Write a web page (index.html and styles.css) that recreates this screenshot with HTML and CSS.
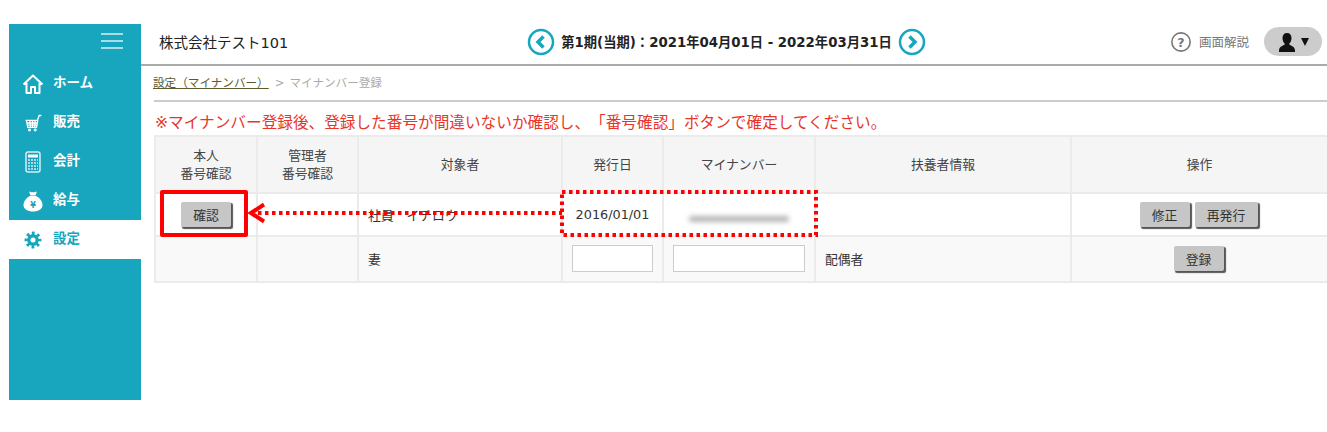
FILE: index.html
```html
<!DOCTYPE html>
<html lang="ja">
<head>
<meta charset="utf-8">
<title>マイナンバー登録</title>
<link rel="stylesheet" href="styles.css">
</head>
<body>
<div class="app">
  <aside class="sidebar">
    <div class="burger"><span></span><span></span><span></span></div>
    <nav class="menu">
      <a class="item"><svg class="ico" viewBox="0 0 22 22"><path d="M1.500 11.500 11 2.500l9.500 9M4.500 10v10h4.500v-6h4v6h4.500V10" fill="none" stroke="#fff" stroke-width="2" stroke-linejoin="round"/></svg><span class="lbl">ホーム</span></a>
      <a class="item"><svg class="ico" viewBox="-2 -2 25 25"><path d="M2 7.500h13.500l2-5.500h2.500M3 7.500l1.500 8h10l1.500-8M4 10.500h12M4.500 13h11M7 7.500l.5 8M10 7.500v8M13 7.500l-.5 8" fill="none" stroke="#fff" stroke-width="1.500"/><circle cx="6.500" cy="18.500" r="1.700" fill="#fff"/><circle cx="13" cy="18.500" r="1.700" fill="#fff"/></svg><span class="lbl">販売</span></a>
      <a class="item"><svg class="ico" viewBox="0 0 22 22"><rect x="4" y="1" width="14" height="20" rx="2" fill="none" stroke="#d5eef3" stroke-width="1.500"/><rect x="6" y="3.500" width="10" height="3" fill="#fff"/><path d="M6 9h10M6 12h10M6 15h10M6 18h10" stroke="#d5eef3" stroke-width="1.600" stroke-dasharray="2 1"/></svg><span class="lbl">会計</span></a>
      <a class="item"><svg class="ico" viewBox="0 0 22 22"><path d="M7 1.500c2 1 6 1 8 0l-1.500 4h-5z" fill="#fff"/><path d="M8 6h6c4 2 6.500 5.500 6.500 9 0 4-4 6.500-9.500 6.500S1.500 19 1.500 15c0-3.500 2.500-7 6.500-9z" fill="#fff"/><text class="yen" x="11" y="17.500" text-anchor="middle">¥</text></svg><span class="lbl">給与</span></a>
      <a class="item active"><svg class="ico" viewBox="-3 -3 28 28"><circle cx="11" cy="11" r="7.500" fill="#17a6bd"/><circle cx="11" cy="11" r="8.500" fill="none" stroke="#17a6bd" stroke-width="4.500" stroke-dasharray="3.340 3.340" stroke-dashoffset="1.670"/><circle cx="11" cy="11" r="3.200" fill="#fff"/></svg><span class="lbl">設定</span></a>
    </nav>
  </aside>
  <main class="main">
    <header class="topbar">
      <div class="company">株式会社テスト101</div>
      <div class="period">
        <svg class="round" viewBox="0 0 28 28"><circle cx="14" cy="14" r="12" fill="none" stroke="#17a6bd" stroke-width="2.500"/><path d="M16.500 8.500 11 14l5.500 5.500" fill="none" stroke="#17a6bd" stroke-width="3.500"/></svg>
        <span class="period-text">第1期(当期)：2021年04月01日 - 2022年03月31日</span>
        <svg class="round" viewBox="0 0 28 28"><circle cx="14" cy="14" r="12" fill="none" stroke="#17a6bd" stroke-width="2.500"/><path d="M11.500 8.500 17 14l-5.500 5.500" fill="none" stroke="#17a6bd" stroke-width="3.500"/></svg>
      </div>
      <div class="tools">
        <div class="help">
          <svg class="help-ico" viewBox="0.500 0.500 19 19"><circle cx="10" cy="10" r="8.700" fill="none" stroke="#777" stroke-width="1.500"/><text class="q" x="10" y="14.500" text-anchor="middle">?</text></svg>
          <span>画面解説</span>
        </div>
        <div class="user">
          <svg class="user-ico" viewBox="0 0 20 20"><path d="M10 1c3 0 4.500 2 4.500 5s-1.200 5-2.500 6c.5 1.500 6 2 6 6.500V20H2v-1.500C2 14 7.500 13.500 8 12 6.700 11 5.500 9 5.500 6S7 1 10 1z" fill="#111"/></svg>
          <span class="caret"></span>
        </div>
      </div>
    </header>
    <div class="crumbs"><a class="crumb-link">設定（マイナンバー）</a><span class="crumb-sep">&gt;</span><span>マイナンバー登録</span></div>
    <p class="notice">※マイナンバー登録後、登録した番号が間違いないか確認し、「番号確認」ボタンで確定してください。</p>
    <div class="table-wrap">
      <table class="grid">
        <colgroup>
          <col class="c1"><col class="c2"><col class="c3"><col class="c4"><col class="c5"><col class="c6"><col class="c7">
        </colgroup>
        <thead>
          <tr class="head">
            <th>本人<br>番号確認</th><th>管理者<br>番号確認</th><th>対象者</th><th>発行日</th><th>マイナンバー</th><th>扶養者情報</th><th>操作</th>
          </tr>
        </thead>
        <tbody>
          <tr class="row-a">
            <td class="mid"><button class="btn">確認</button></td>
            <td></td>
            <td>社員　イチロウ</td>
            <td class="mid">2016/01/01</td>
            <td class="mid"><span class="blurred"></span></td>
            <td></td>
            <td class="mid ops"><button class="btn">修正</button><button class="btn">再発行</button></td>
          </tr>
          <tr class="row-b">
            <td></td>
            <td></td>
            <td>妻</td>
            <td class="mid"><input class="field f-date" type="text"></td>
            <td class="mid"><input class="field f-num" type="text"></td>
            <td>配偶者</td>
            <td class="mid ops"><button class="btn">登録</button></td>
          </tr>
        </tbody>
      </table>
      <div class="mark-box"></div>
      <svg class="mark-dots" width="258" height="47" viewBox="0 0 258 47"><rect x="2" y="2" width="254" height="43" fill="none" stroke="#f00" stroke-width="4" stroke-dasharray="3.500 3.500"/></svg>
      <svg class="mark-arrow" width="316" height="24" viewBox="0 0 316 24"><path d="M16 3.500 3 12l13 8.500" fill="none" stroke="#f00" stroke-width="4"/><path d="M10 12h304" stroke="#f00" stroke-width="4" stroke-dasharray="3.500 3.500"/></svg>
    </div>
  </main>
</div>
</body>
</html>
```
FILE: styles.css
```css
* { box-sizing: border-box; }
html, body { margin: 0; padding: 0; background: #fff; }
body {
  font-family: "DejaVu Sans", "Noto Sans CJK JP", sans-serif;
  font-size: 12.800px;
  color: #333;
  height: 432px;
  overflow: hidden;
  text-spacing-trim: space-all;
}
.app { display: flex; height: 376px; margin: 24px 0 0 9px; }
.sidebar { width: 132px; flex: none; background: #17a6bd; }
.burger {
  height: 40px;
  padding: 9px 18px 0 92px;
  display: flex;
  flex-direction: column;
  gap: 5px;
}
.burger span { display: block; height: 2px; background: #a6dde6; }
.menu { display: flex; flex-direction: column; }
.item {
  height: 39px;
  display: flex;
  align-items: center;
  padding-left: 13px;
  color: #fff;
  font-weight: 700;
  font-size: 13.500px;
}
.item.active { background: #fff; color: #17a6bd; }
.ico { width: 22px; height: 22px; flex: none; }
.lbl { margin-left: 9px; padding-bottom: 6px; }
.yen { font-size: 8px; font-weight: 700; fill: #17a6bd; }
.main { flex: 1; min-width: 0; display: flex; flex-direction: column; }
.topbar {
  height: 42px;
  border-bottom: 2px solid #aaa;
  display: grid;
  grid-template-columns: 1fr auto 1fr;
  align-items: center;
  padding: 0 5px 5px 18px;
}
.company { font-size: 14.500px; color: #222; white-space: nowrap; }
.period { display: flex; align-items: center; gap: 6px; margin-right: 28px; }
.round { width: 28px; height: 28px; flex: none; }
.period-text { font-weight: 700; font-size: 13.300px; color: #222; white-space: nowrap; }
.tools { display: flex; justify-content: flex-end; align-items: center; gap: 15px; }
.help { display: flex; align-items: center; gap: 8px; color: #777; font-size: 12.500px; }
.help-ico { width: 20px; height: 20px; }
.q { font-size: 12px; fill: #777; font-weight: 700; }
.user {
  width: 58px;
  height: 29px;
  border-radius: 15px;
  background: #ccc;
  display: flex;
  align-items: center;
  justify-content: center;
  gap: 4px;
}
.user-ico { width: 20px; height: 20px; }
.caret {
  width: 0;
  height: 0;
  border-left: 4.500px solid transparent;
  border-right: 4.500px solid transparent;
  border-top: 8px solid #111;
}
.crumbs {
  height: 36px;
  padding-top: 8px;
  color: #aaa;
  font-size: 11.600px;
  border-bottom: 2px solid #ccc;
  margin-left: 13px;
}
.crumb-link { color: #5a5a2e; text-decoration: underline; margin-left: -1px; }
.crumb-sep { margin: 0 5px 0 6px; }
.notice {
  margin: 11px 0 0 14px;
  height: 22px;
  font-size: 15.650px;
  line-height: 20px;
  color: #e8352a;
  white-space: nowrap;
}
.table-wrap { position: relative; margin-left: 13px; }
.grid { width: 1173px; table-layout: fixed; border-collapse: collapse; }
.c1 { width: 102px; } .c2 { width: 101px; } .c3 { width: 204px; } .c4 { width: 101px; }
.c5 { width: 152px; } .c6 { width: 256px; } .c7 { width: 257px; }
.grid th, .grid td { border: 2px solid #ebebeb; padding: 0; vertical-align: middle; font-weight: 400; }
.grid th { text-align: center; line-height: 18px; color: #444; height: 57px; background: #f5f5f5; }
.grid td { padding-left: 9px; }
.grid td.mid { padding-left: 0; text-align: center; }
.grid td.ops { padding-right: 2px; }
.row-a td { height: 43px; background: #fff; }
.row-b td { height: 46px; background: #f9f9f9; padding-bottom: 2px; }
.btn {
  height: 25px;
  padding: 0;
  width: 50px;
  border: 0;
  border-radius: 2px;
  background: #c6c6c6;
  box-shadow: 1.500px 1.500px 1px #555;
  color: #333;
  font: inherit;
}
.ops .btn + .btn { width: 63px; margin-left: 5px; }
.field { display: inline-block; vertical-align: middle; height: 27px; border: 1px solid #ccc; background: #fff; padding: 0; }
.f-date { width: 81px; }
.f-num { width: 132px; }
.blurred {
  display: inline-block;
  width: 100px;
  height: 6px;
  margin-top: 8px;
  vertical-align: middle;
  background: #b5b5b5;
  border-radius: 3px;
  filter: blur(2.500px);
}
.mark-box {
  position: absolute;
  left: 6px;
  top: 55px;
  width: 88px;
  height: 47px;
  border: 4px solid #f00;
  border-radius: 2px;
}
.mark-dots { position: absolute; left: 406px; top: 55px; }
.mark-arrow { position: absolute; left: 94px; top: 66px; }
```
